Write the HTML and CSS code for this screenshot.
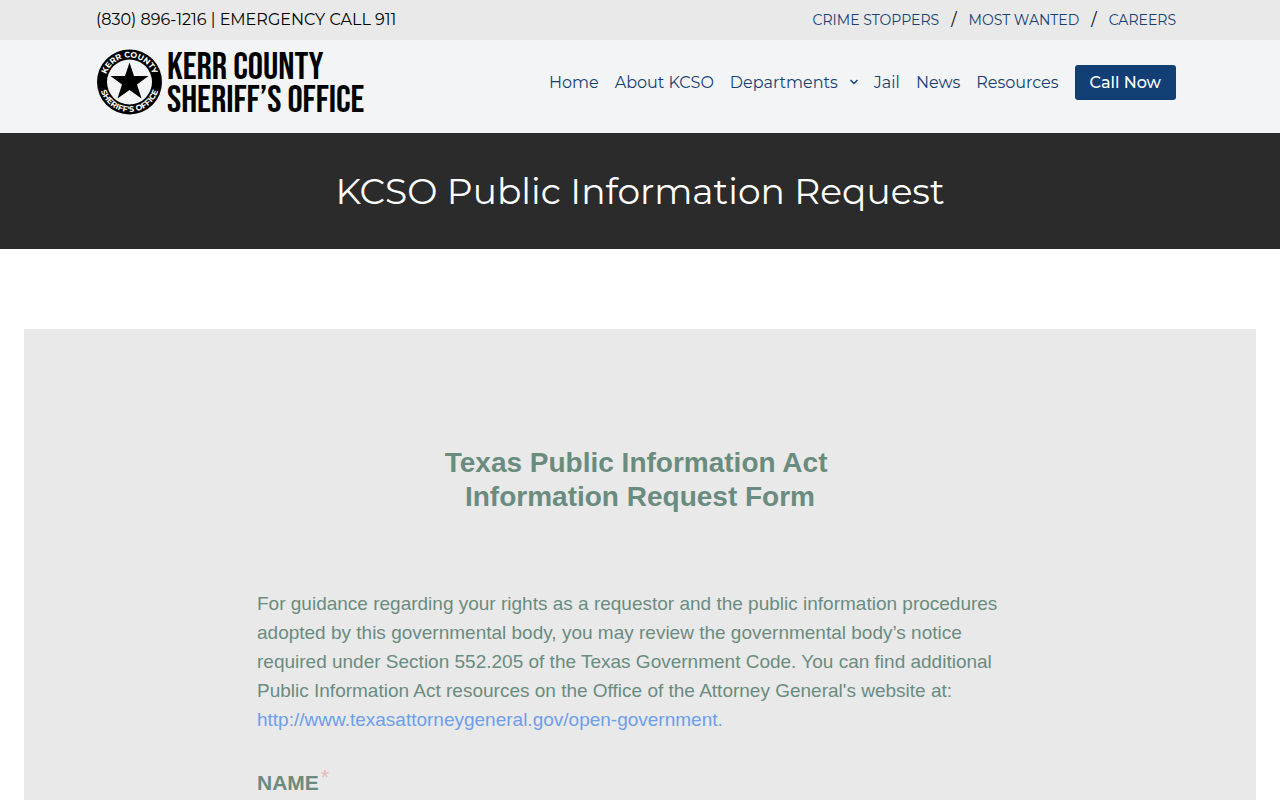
FILE: index.html
```html
<!DOCTYPE html>
<html lang="en">
<head>
    <meta charset="UTF-8">
    <meta name="viewport" content="width=device-width, initial-scale=1.0">
    <title>KCSO Public Information Request</title>
    <link rel="stylesheet" href="styles.css">
</head>
<body>

    <!-- Top bar -->
    <div class="topbar">
        <div class="container">
            <span class="phone">(830) 896-1216 | EMERGENCY CALL 911</span>
            <nav class="top-links">
                <a href="#">CRIME STOPPERS</a>
                <span>/</span>
                <a href="#">MOST WANTED</a>
                <span>/</span>
                <a href="#">CAREERS</a>
            </nav>
        </div>
    </div>

    <!-- Header -->
    <header class="header">
        <div class="container">
            <a class="logo" href="#">
                <svg class="badge" viewBox="0 0 66 66" width="66" height="66" aria-hidden="true">
                    <defs>
                        <path id="arc-top" d="M9 33a24.500 24.500 0 0 1 49 0"/>
                        <path id="arc-bottom" d="M3.500 30v3a30 30 0 0 0 60 0v-3"/>
                    </defs>
                    <circle cx="33.500" cy="33" r="32.500"/>
                    <circle cx="33.500" cy="33" r="22.500" fill="#f2f4f6"/>
                    <path d="M33.500 13.500l4.500 13.500h14.500L41 35.500l4.500 14L33.500 41l-12 8.500 4.500-14L14.500 27H29z"/>
                    <text class="badge-text" text-anchor="middle"><textPath href="#arc-top" startOffset="50%">KERR COUNTY</textPath></text>
                    <text class="badge-text" text-anchor="middle"><textPath href="#arc-bottom" startOffset="50%">SHERIFF'S OFFICE</textPath></text>
                </svg>
                <span class="logo-text">KERR COUNTY<br>SHERIFF’S OFFICE</span>
            </a>
            <nav class="menu">
                <a href="#">Home</a>
                <a href="#">About KCSO</a>
                <a href="#" class="has-sub">Departments
                    <svg viewBox="0 0 8 6" width="8" height="6" aria-hidden="true"><path d="M0.500 1l3.500 3.500L7.500 1"/></svg>
                </a>
                <a href="#">Jail</a>
                <a href="#">News</a>
                <a href="#">Resources</a>
                <button type="button" class="call-btn">Call Now</button>
            </nav>
        </div>
    </header>

    <!-- Page title -->
    <section class="hero">
        <h1>KCSO Public Information Request</h1>
    </section>

    <!-- Request form -->
    <main class="content">
        <form class="panel">
            <div class="form-inner">
                <h2>Texas Public Information Act&nbsp;<br>Information Request Form</h2>
                <p>For guidance regarding your rights as a requestor and the public information procedures adopted by this governmental body, you may review the governmental body’s notice required under Section 552.205 of the Texas Government Code. You can find additional Public Information Act resources on the Office of the Attorney General's website at: <a href="#">http://www.texasattorneygeneral.gov/open-government.</a></p>
                <label for="name">NAME<span class="required">*</span></label>
                <input type="text" id="name" required>
            </div>
        </form>
    </main>

</body>
</html>
```
FILE: styles.css
```css
/* General */
* {
    box-sizing: border-box;
}

body {
    margin: 0;
    font-family: Montserrat, Inter, sans-serif;
    font-size: 16px;
    color: #000;
    background-color: #fff;
}

a {
    color: #163f73;
    text-decoration: none;
}

.container {
    display: flex;
    justify-content: space-between;
    align-items: center;
    max-width: 1088px;
    margin: 0 auto;
}

/* Top bar */
.topbar {
    background-color: #e9e9e9;
    line-height: 40px;
}

.top-links {
    display: flex;
    gap: 12px;
    padding-right: 8px;
}

.top-links a {
    font-size: 14px;
}

/* Header */
.header {
    padding: 9px 0 18px;
    background-color: #f2f4f6;
}

.logo {
    display: flex;
    align-items: flex-start;
    gap: 5px;
    height: 66px;
    color: #000;
}

.badge {
    display: block;
}

.badge-text {
    font-family: Montserrat, "Liberation Sans", sans-serif;
    font-size: 8px;
    font-weight: bold;
    fill: #fff;
}

.logo-text {
    padding-top: 2px;
    font-family: "Bebas Neue", Roboto, sans-serif;
    font-size: 38px;
    line-height: 33px;
}

.menu {
    display: flex;
    align-items: center;
    gap: 16px;
    padding-right: 8px;
}

.has-sub {
    display: flex;
    align-items: center;
    gap: 12px;
}

.has-sub svg {
    fill: none;
    stroke: #163f73;
    stroke-width: 1.5;
}

.call-btn {
    height: 35px;
    padding: 0 15px;
    border: none;
    border-radius: 3px;
    background-color: #113f75;
    color: #fff;
    font-family: inherit;
    font-size: 16px;
    font-weight: 500;
    cursor: pointer;
}

/* Page title */
.hero {
    padding: 34px 24px;
    background-color: #2b2b2b;
    color: #fff;
    text-align: center;
}

.hero h1 {
    margin: 0;
    font-size: 36px;
    font-weight: 400;
    line-height: 48px;
}

/* Form */
.content {
    padding: 80px 24px;
}

.panel {
    padding: 117px 24px 80px;
    background-color: #e9e9e9;
    color: #6a8c7f;
    font-family: "Liberation Sans", Arial, sans-serif;
}

.form-inner {
    max-width: 766px;
    margin: 0 auto;
}

.form-inner h2 {
    margin: 0 0 75px;
    font-size: 28px;
    line-height: 34px;
    text-align: center;
}

.form-inner p {
    margin: 0 0 33px;
    font-size: 19px;
    line-height: 29px;
}

.form-inner p a {
    color: #6d9eeb;
}

.form-inner label {
    display: flex;
    gap: 2px;
    font-size: 21px;
    font-weight: bold;
    line-height: 32px;
}

.required {
    color: #e6b8b7;
    font-weight: normal;
    line-height: 20px;
}

.form-inner input {
    width: 100%;
    height: 40px;
    margin-top: 12px;
    padding: 0 12px;
    border: 1px solid #ccc;
    font-size: 16px;
}
```
